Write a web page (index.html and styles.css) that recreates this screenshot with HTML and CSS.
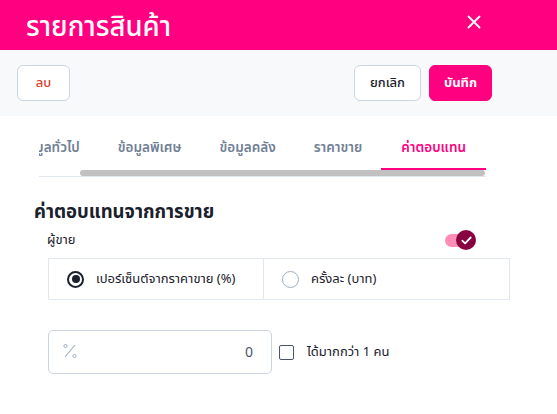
FILE: index.html
```html
<!DOCTYPE html>
<html lang="th">
<head>
<meta charset="utf-8">
<link rel="stylesheet" href="styles.css">
</head>
<body>
<div class="header">
  <h1 class="title">รายการสินค้า</h1>
  <svg class="close" width="14" height="14" viewBox="0 0 14 14"><path d="M1.5 1.5L12.5 12.5M12.5 1.5L1.5 12.5" stroke="#fff" stroke-width="1.8" stroke-linecap="round"/></svg>
</div>
<div class="actions">
  <button class="btn btn-delete">ลบ</button>
  <div class="spacer"></div>
  <button class="btn btn-cancel">ยกเลิก</button>
  <button class="btn btn-save">บันทึก</button>
</div>
<div class="tabs-wrap">
  <div class="tabs">
    <div class="tab">ข้อมูลทั่วไป</div>
    <div class="tab">ข้อมูลพิเศษ</div>
    <div class="tab">ข้อมูลคลัง</div>
    <div class="tab">ราคาขาย</div>
    <div class="tab active">ค่าตอบแทน</div>
  </div>
  <div class="thumb"></div>
</div>
<div class="content">
  <h2 class="section-title">ค่าตอบแทนจากการขาย</h2>
  <div class="seller-row">
    <span class="seller-label">ผู้ขาย</span>
    <span class="toggle">
      <span class="track"></span>
      <span class="knob"><svg width="11" height="9" viewBox="0 0 11 9"><path d="M1.3 4.6L4.1 7.3L9.7 1.5" fill="none" stroke="#fff" stroke-width="1.8" stroke-linecap="round" stroke-linejoin="round"/></svg></span>
    </span>
  </div>
  <div class="radio-box">
    <div class="radio-cell first"><span class="radio checked"></span><span>เปอร์เซ็นต์จากราคาขาย (%)</span></div>
    <div class="radio-cell"><span class="radio"></span><span>ครั้งละ (บาท)</span></div>
  </div>
  <div class="input-row">
    <div class="input">
      <svg class="pct" width="14" height="16" viewBox="0 0 14 16"><circle cx="2.5" cy="3" r="1.6" fill="none" stroke="#A0AEC0" stroke-width="1"/><circle cx="11.5" cy="13" r="1.6" fill="none" stroke="#A0AEC0" stroke-width="1"/><path d="M12 2L2 14" stroke="#A0AEC0" stroke-width="1.1"/></svg>
      <span class="value">0</span>
    </div>
    <span class="checkbox"></span>
    <span class="check-label">ได้มากกว่า 1 คน</span>
  </div>
</div>
</body>
</html>
```
FILE: styles.css
```css
* { box-sizing: border-box; }
html, body { margin: 0; padding: 0; }
body {
  width: 557px;
  height: 414px;
  overflow: hidden;
  background: #fff;
  font-family: "Noto Sans", "Noto Sans Thai", "Inter", sans-serif;
  color: #1A202C;
}
.header {
  height: 50px;
  background: #FF0080;
  display: flex;
  align-items: center;
  justify-content: space-between;
  padding: 0 76px 0 26px;
}
.title {
  margin: 0;
  color: #fff;
  font-size: 27.5px;
  font-weight: 500;
  line-height: 34px;
  margin-top: 2px;
}
.close { margin-top: -6px; }
.actions {
  height: 66px;
  background: #F7F9FB;
  display: flex;
  align-items: center;
  padding: 0 65px 0 17px;
  gap: 8px;
}
.spacer { flex: 1; }
.btn {
  height: 36px;
  border-radius: 6px;
  font-family: inherit;
  font-size: 13px;
  font-weight: 500;
  background: #fff;
  border: 1px solid #CBD5E1;
  padding: 0;
  cursor: pointer;
}
.btn-delete { width: 53px; color: #D9402B; }
.btn-cancel { width: 67px; color: #1A202C; }
.btn-save { width: 63px; background: #FF0080; border-color: #FF0080; color: #fff; font-weight: 700; }
.tabs-wrap {
  margin-left: 39px;
  width: 447px;
  border-bottom: 1px solid #E2E8F0;
}
.tabs {
  display: flex;
  justify-content: flex-end;
  overflow: hidden;
}
.tab {
  flex: none;
  padding: 21px 19px 11px;
  line-height: 20px;
  font-size: 13.5px;
  font-weight: 600;
  color: #718096;
  border-bottom: 2px solid transparent;
  white-space: nowrap;
}
.tab.active { color: #FF0080; border-bottom-color: #FF0080; padding: 21px 20px 11px; }
.thumb {
  margin-left: 41px;
  width: 405px;
  height: 6px;
  border-radius: 3px;
  background: #C1C1C1;
}
.content { padding: 0 0 0 34px; }
.section-title {
  margin: 22px 0 0;
  font-size: 18.5px;
  line-height: 24px;
  font-weight: 700;
  color: #1A202C;
}
.seller-row {
  margin: 6px 0 0 13px;
  width: 429px;
  height: 22px;
  display: flex;
  align-items: center;
  justify-content: space-between;
}
.seller-label { font-size: 13px; color: #1A202C; }
.toggle { position: relative; width: 31px; height: 20px; display: inline-block; }
.track {
  position: absolute;
  left: 0; top: 4px;
  width: 25px; height: 13px;
  border-radius: 7px;
  background: #FF8DB6;
}
.knob {
  position: absolute;
  right: 0; top: 0;
  width: 20px; height: 20px;
  border-radius: 50%;
  background: #870040;
  display: flex;
  align-items: center;
  justify-content: center;
}
.radio-box {
  margin: 7px 0 0 14px;
  width: 462px;
  height: 42px;
  border: 1px solid #E2E8F0;
  display: flex;
}
.radio-cell {
  display: flex;
  align-items: center;
  gap: 12px;
  padding-left: 18px;
  font-size: 13px;
  color: #1A202C;
  flex: 1;
}
.radio-cell.first { flex: none; width: 215px; border-right: 1px solid #E2E8F0; }
.radio {
  width: 17px; height: 17px;
  border-radius: 50%;
  border: 1px solid #A0AEC0;
  flex: none;
  position: relative;
}
.radio.checked { border: 2px solid #1A202C; }
.radio.checked::after {
  content: "";
  position: absolute;
  left: 2.5px; top: 2.5px;
  width: 8px; height: 8px;
  border-radius: 50%;
  background: #1A202C;
}
.input-row {
  margin: 30px 0 0 14px;
  display: flex;
  align-items: center;
}
.input {
  width: 224px;
  height: 44px;
  border: 1px solid #CBD5E1;
  border-radius: 5px;
  display: flex;
  align-items: center;
  justify-content: space-between;
  padding: 0 18px 0 14px;
}
.pct { margin-top: -2px; }
.value { font-size: 14px; color: #4A5568; margin-top: -2px; }
.checkbox {
  margin-left: 7px;
  width: 15px; height: 15px;
  border: 1px solid #4A5568;
  border-radius: 2px;
  flex: none;
}
.check-label { margin-left: 13px; font-size: 13px; color: #1A202C; }
```
